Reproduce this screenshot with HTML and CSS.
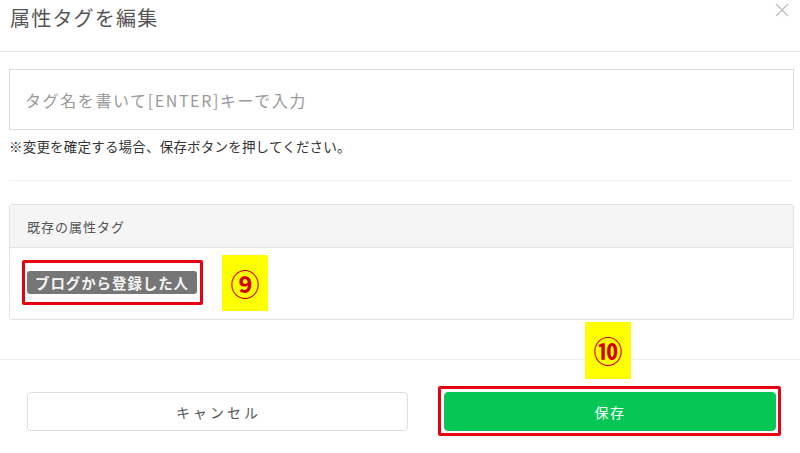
FILE: index.html
```html
<!DOCTYPE html>
<html lang="ja">
<head>
<meta charset="utf-8">
<title>属性タグを編集</title>
<link rel="stylesheet" href="styles.css">
</head>
<body>
<div class="modal">
  <header class="modal-header">
    <h1 class="modal-title">属性タグを編集</h1>
    <button class="close" aria-label="閉じる">
      <svg width="14" height="14" viewBox="0 0 14 14"><path d="M1 1 L13 13 M13 1 L1 13" stroke="#bdbdbd" stroke-width="1.3" fill="none"/></svg>
    </button>
  </header>
  <section class="modal-body">
    <div class="tag-input">タグ名を書いて[ENTER]キーで入力</div>
    <p class="note">※変更を確定する場合、保存ボタンを押してください。</p>
    <hr class="divider">
    <div class="panel">
      <div class="panel-head">既存の属性タグ</div>
      <div class="panel-body">
        <div class="mark-box">
          <span class="tag">ブログから登録した人</span>
        </div>
      </div>
    </div>
  </section>
  <footer class="modal-footer">
    <button class="btn btn-cancel">キャンセル</button>
    <button class="btn btn-save">保存</button>
  </footer>
</div>
<div class="note-label label-9">⑨</div>
<div class="note-label label-10">⑩</div>
<div class="mark-save"></div>
</body>
</html>
```

FILE: styles.css
```css
* { box-sizing: border-box; }
html, body {
  margin: 0;
  padding: 0;
  background: #fff;
}
body {
  width: 800px;
  height: 453px;
  overflow: hidden;
  position: relative;
  font-family: "Noto Sans CJK JP", "Noto Sans", sans-serif;
  color: #333;
}
.modal-header {
  height: 52px;
  border-bottom: 1px solid #e6e6e6;
  display: flex;
  justify-content: space-between;
  align-items: flex-start;
  padding: 3px 12px 0 10px;
}
.modal-title {
  margin: 0;
  font-size: 20px;
  font-weight: 400;
  line-height: 30px;
  color: #555;
  letter-spacing: 1.2px;
}
.close {
  border: 0;
  background: none;
  padding: 0;
  margin-top: 0;
  margin-right: -1px;
  width: 14px;
  height: 14px;
  display: flex;
}
.modal-body {
  padding: 17px 6px 0 9px;
}
.tag-input {
  height: 61px;
  border: 1px solid #dcdcdc;
  padding-left: 15px;
  display: flex;
  align-items: center;
  font-size: 16px;
  color: #9a9a9a;
  letter-spacing: 1.6px;
}
.note {
  margin: 7px 0 0 0;
  font-size: 13.5px;
  line-height: 18px;
  color: #333;
  letter-spacing: 0.2px;
}
.divider {
  border: 0;
  border-top: 1px solid #f0f0f0;
  margin: 25px 2px 0 0;
  height: 0;
}
.panel {
  margin-top: 23px;
  border: 1px solid #e2e2e2;
  border-radius: 3px;
  height: 116px;
}
.panel-head {
  height: 43px;
  background: #f5f5f5;
  border-bottom: 1px solid #e2e2e2;
  padding-left: 17px;
  display: flex;
  align-items: center;
  font-size: 13px;
  color: #555;
  letter-spacing: 1px;
}
.panel-body {
  padding: 12px 12px;
  display: flex;
}
.mark-box {
  border: 3px solid #e60012;
  border-radius: 2px;
  padding: 8px 3px 8px 2px;
  display: flex;
}
.tag {
  display: inline-block;
  background: #767676;
  color: #f4f4f4;
  font-size: 14.5px;
  font-weight: 700;
  line-height: 23px;
  height: 23px;
  padding: 0 8px;
  border-radius: 3px;
  letter-spacing: 0.9px;
}
.modal-footer {
  position: absolute;
  top: 359px;
  left: 0;
  width: 800px;
  border-top: 1px solid #ececec;
  padding: 32px 24px 0 27px;
  display: flex;
  gap: 36px;
}
.btn {
  height: 39px;
  border-radius: 4px;
  font-family: inherit;
  font-size: 14px;
  cursor: pointer;
}
.btn-cancel {
  width: 381px;
  background: #fff;
  border: 1px solid #dedede;
  color: #555;
  letter-spacing: 3px;
  padding-left: 8px;
}
.btn-save {
  width: 332px;
  background: #06c755;
  border: 1px solid #06c755;
  color: #fff;
  letter-spacing: 1.5px;
}
.note-label {
  position: absolute;
  width: 46px;
  background: #ffff00;
  color: #d40000;
  font-size: 29px;
  font-weight: 700;
  line-height: 1;
  display: flex;
  align-items: center;
  justify-content: center;
}
.label-9 { left: 222px; top: 255px; height: 56px; }
.label-10 { left: 585px; top: 322px; height: 57px; }
.mark-save {
  position: absolute;
  left: 438px;
  top: 386px;
  width: 343px;
  height: 50px;
  border: 3px solid #e60012;
  border-radius: 2px;
}
```
